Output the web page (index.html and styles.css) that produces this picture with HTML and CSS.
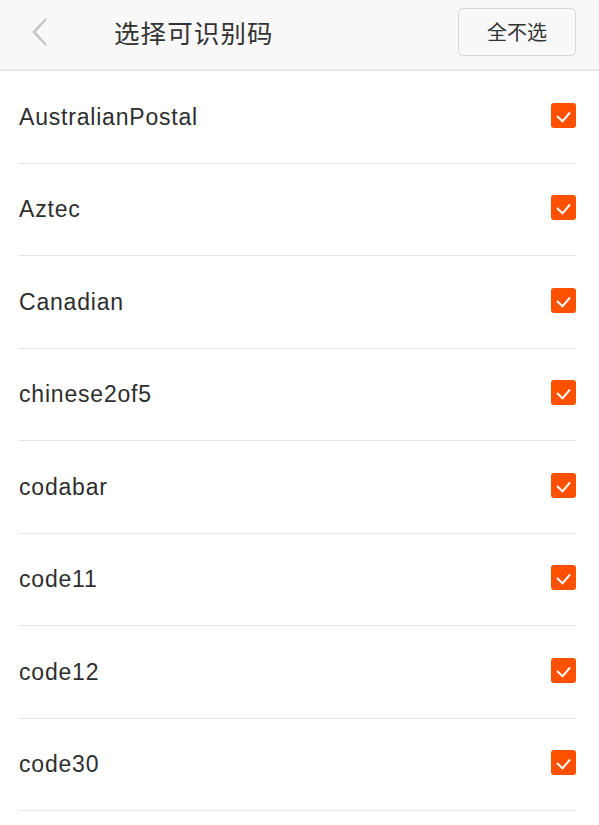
FILE: index.html
```html
<!DOCTYPE html>
<html lang="zh">
<head>
<meta charset="utf-8">
<link rel="stylesheet" href="styles.css">
</head>
<body>
<header class="bar">
  <div class="back">
    <svg width="18" height="30" viewBox="0 0 18 30"><path d="M15 2 L3 15 L15 28" fill="none" stroke="#c4c4c4" stroke-width="2.4"/></svg>
  </div>
  <div class="title">选择可识别码</div>
  <button class="btn">全不选</button>
</header>
<ul class="list">
  <li class="row"><span class="name">AustralianPostal</span><span class="check"><svg width="25" height="25" viewBox="0 0 25 25"><path d="M6 13 L11.5 18.3 L19 9.5" fill="none" stroke="#fff" stroke-width="2"/></svg></span></li>
  <li class="row"><span class="name">Aztec</span><span class="check"><svg width="25" height="25" viewBox="0 0 25 25"><path d="M6 13 L11.5 18.3 L19 9.5" fill="none" stroke="#fff" stroke-width="2"/></svg></span></li>
  <li class="row"><span class="name">Canadian</span><span class="check"><svg width="25" height="25" viewBox="0 0 25 25"><path d="M6 13 L11.5 18.3 L19 9.5" fill="none" stroke="#fff" stroke-width="2"/></svg></span></li>
  <li class="row"><span class="name">chinese2of5</span><span class="check"><svg width="25" height="25" viewBox="0 0 25 25"><path d="M6 13 L11.5 18.3 L19 9.5" fill="none" stroke="#fff" stroke-width="2"/></svg></span></li>
  <li class="row"><span class="name">codabar</span><span class="check"><svg width="25" height="25" viewBox="0 0 25 25"><path d="M6 13 L11.5 18.3 L19 9.5" fill="none" stroke="#fff" stroke-width="2"/></svg></span></li>
  <li class="row"><span class="name">code11</span><span class="check"><svg width="25" height="25" viewBox="0 0 25 25"><path d="M6 13 L11.5 18.3 L19 9.5" fill="none" stroke="#fff" stroke-width="2"/></svg></span></li>
  <li class="row"><span class="name">code12</span><span class="check"><svg width="25" height="25" viewBox="0 0 25 25"><path d="M6 13 L11.5 18.3 L19 9.5" fill="none" stroke="#fff" stroke-width="2"/></svg></span></li>
  <li class="row"><span class="name">code30</span><span class="check"><svg width="25" height="25" viewBox="0 0 25 25"><path d="M6 13 L11.5 18.3 L19 9.5" fill="none" stroke="#fff" stroke-width="2"/></svg></span></li>
</ul>
</body>
</html>
```
FILE: styles.css
```css
* { box-sizing: border-box; }
html, body { margin: 0; padding: 0; background: #fff; }
body { font-family: "Liberation Sans", "Noto Sans CJK SC", sans-serif; color: #222; width: 599px; height: 825px; overflow: hidden; }
.bar {
  height: 71px;
  background: #f8f8f8;
  border-bottom: 2px solid #e6e6e6;
  display: flex;
  align-items: center;
  padding: 0 23px 6px 31px;
}
.back { width: 18px; height: 30px; display: flex; }
.title {
  margin-left: 65px;
  font-family: "Noto Sans CJK SC", sans-serif;
  font-size: 25.5px;
  color: #333;
  flex: 1;
  letter-spacing: 1.1px;
}
.btn {
  width: 118px; height: 48px;
  background: #f8f8f8;
  border: 1px solid #d6d6d6;
  border-radius: 5px;
  font-family: "Noto Sans CJK SC", sans-serif;
  font-size: 20px;
  color: #333;
  padding: 0;
}
.list { list-style: none; margin: 0; padding: 0 23px 0 19px; }
.row {
  height: 92.5px;
  border-bottom: 1.5px solid #e4e4e4;
  display: flex;
  align-items: center;
  justify-content: space-between;
}
.name { font-size: 23px; letter-spacing: 0.8px; color: #2e2e2e; margin-top: 1px; }
.check {
  width: 25px; height: 25px;
  background: #ff5000;
  border-radius: 3px;
  display: flex;
  margin-top: -3px;
}
```
